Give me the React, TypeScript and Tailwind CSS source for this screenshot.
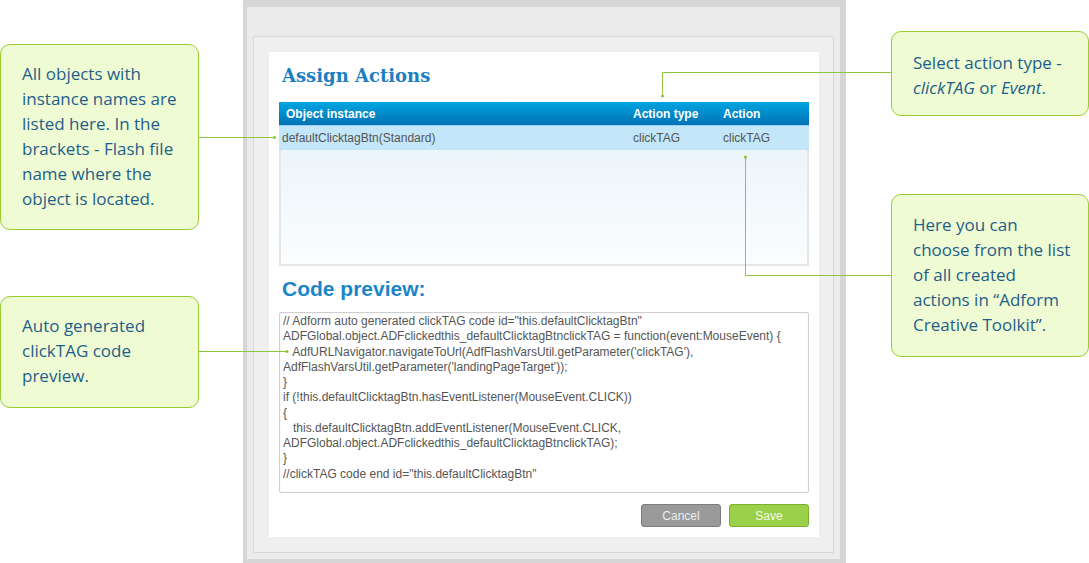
import React from 'react';

const codeLines = [
  '// Adform auto generated clickTAG code id="this.defaultClicktagBtn"',
  'ADFGlobal.object.ADFclickedthis_defaultClicktagBtnclickTAG = function(event:MouseEvent) {',
  "   AdfURLNavigator.navigateToUrl(AdfFlashVarsUtil.getParameter('clickTAG'),",
  "AdfFlashVarsUtil.getParameter('landingPageTarget'));",
  '}',
  'if (!this.defaultClicktagBtn.hasEventListener(MouseEvent.CLICK))',
  '{',
  '   this.defaultClicktagBtn.addEventListener(MouseEvent.CLICK,',
  'ADFGlobal.object.ADFclickedthis_defaultClicktagBtnclickTAG);',
  '}',
  '//clickTAG code end id="this.defaultClicktagBtn"',
];

const calloutBase =
  'absolute rounded-[10px] border border-[#9acd32] bg-[#effcd3] pl-[21px] text-[17px] leading-[25px] text-[#1f5e8a] [font-family:"Open_Sans",sans-serif]';

function Callouts() {
  return (
    <>
      <div className={`${calloutBase} left-0 top-[44px] h-[186px] w-[199px] pt-[16px]`}>
        All objects with
        <br />
        instance names are
        <br />
        listed here. In the
        <br />
        brackets - Flash file
        <br />
        name where the
        <br />
        object is located.
      </div>
      <div className={`${calloutBase} left-0 top-[296px] h-[112px] w-[199px] pt-[16px]`}>
        Auto generated
        <br />
        clickTAG code
        <br />
        preview.
      </div>
      <div className={`${calloutBase} left-[891px] top-[31px] h-[85px] w-[198px] pt-[18px]`}>
        Select action type -
        <br />
        <i>clickTAG</i> or <i>Event</i>.
      </div>
      <div className={`${calloutBase} left-[891px] top-[194px] h-[163px] w-[198px] pt-[17px]`}>
        Here you can
        <br />
        choose from the list
        <br />
        of all created
        <br />
        actions in “Adform
        <br />
        Creative Toolkit”.
      </div>

      {/* connector lines */}
      <svg className="pointer-events-none absolute left-0 top-0" width="1089" height="563">
        <g stroke="#8cc63f" strokeWidth="1" fill="none">
          <path d="M198 137.5 H274.5" />
          <path d="M198 351.5 H287" />
          <path d="M891 72.5 H662.5 V96" />
          <path d="M891 275.5 H745.5 V157" />
        </g>
        <g fill="#8cc63f">
          <circle cx="274.5" cy="137.5" r="1.6" />
          <circle cx="287" cy="351.5" r="1.6" />
          <circle cx="662.5" cy="96" r="1.6" />
          <circle cx="745.5" cy="157" r="1.6" />
        </g>
      </svg>
    </>
  );
}

function AssignPanel() {
  return (
    <div className="h-[485px] w-[550px] bg-white [font-family:'Liberation_Sans',Arial,sans-serif]">
      <h1 className="ml-[13px] pt-[12px] text-[18px] font-bold leading-[24px] text-[#1b80c2] [font-family:'DejaVu_Serif',serif]">
        Assign Actions
      </h1>

      {/* table */}
      <div className="mx-[10px] mt-[14px]">
        <div className="grid h-[23px] grid-cols-[354px_90px_1fr] items-center bg-gradient-to-b from-[#00a5e2] to-[#0072b4] text-[12px] font-bold text-white">
          <span className="pl-[7px]">Object instance</span>
          <span>Action type</span>
          <span>Action</span>
        </div>
        <div className="grid h-[25px] grid-cols-[354px_90px_1fr] items-center border-t border-[#9fd2ee] bg-[#c3e6f8] text-[12px] text-[#555]">
          <span className="pl-[3px]">defaultClicktagBtn(Standard)</span>
          <span>clickTAG</span>
          <span>clickTAG</span>
        </div>
        <div className="h-[116px] border-x-2 border-b-2 border-[#e4e6e8] bg-gradient-to-b from-[#ecf5fb] to-[#fbfdfe]" />
      </div>

      <h2 className="ml-[13px] mt-[11px] text-[21px] font-bold leading-[24px] text-[#1a86c7]">Code preview:</h2>

      <div className="mx-[10px] mt-[11px] h-[181px] rounded-[2px] border border-[#cfcfcf] pl-[3px] pt-[1px] shadow-[inset_0_0_2px_rgba(0,0,0,0.08)]">
        {codeLines.map((line, i) => (
          <div key={i} className="whitespace-pre text-[12px] leading-[15.25px] text-[#555]">
            {line}
          </div>
        ))}
      </div>

      <div className="mt-[11px] flex justify-end gap-[8px] pr-[10px]">
        <button className="h-[23px] w-[80px] rounded-[3px] border border-[#7d7d7d] bg-[#9a9a9a] text-[12px] text-[#ececec]">
          Cancel
        </button>
        <button className="h-[23px] w-[80px] rounded-[3px] border border-[#7eae2f] bg-[#9bd04a] text-[12px] text-[#f4fbe8]">
          Save
        </button>
      </div>
    </div>
  );
}

export default function App() {
  return (
    <div className="relative h-[563px] w-[1089px] overflow-hidden bg-white">
      <div className="ml-[243px] h-[563px] w-[603px] border-b-4 border-l-4 border-r-[6px] border-t-[7px] border-[#d6d6d6] bg-[#ebebeb] px-[6px] pt-[29px]">
        <div className="h-[517px] w-[581px] border border-[#d9d9d9] bg-[#efefef] p-[15px] pr-[14px]">
          <AssignPanel />
        </div>
      </div>
      <Callouts />
    </div>
  );
}
